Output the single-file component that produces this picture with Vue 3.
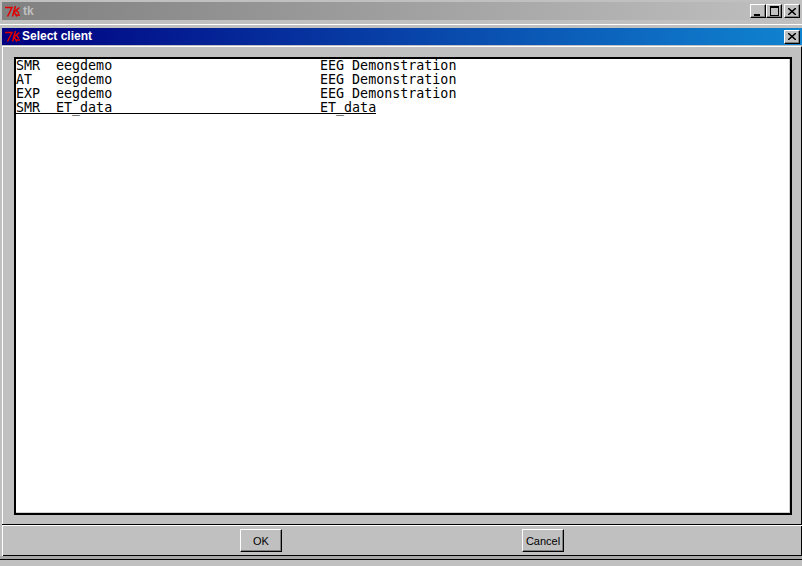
<script setup>
const rows = [
  { kind: 'SMR', name: 'eegdemo', desc: 'EEG Demonstration' },
  { kind: 'AT', name: 'eegdemo', desc: 'EEG Demonstration' },
  { kind: 'EXP', name: 'eegdemo', desc: 'EEG Demonstration' },
  { kind: 'SMR', name: 'ET_data', desc: 'ET_data', active: true },
]
</script>

<template>
  <div class="screen">
    <header class="titlebar outer">
      <svg class="tk" width="15" height="11" viewBox="0 0 15 11"><g fill="none" stroke="#e00000" stroke-width="1.500"><path d="M0 1.500H7L2.500 10.500" /><path d="M10.500 0L7.500 10.500" /><path d="M14.500 1.500L9 6L12 10.500M11.500 4.500L14 7.500M11 9H15" /></g></svg>
      <span class="title dim">tk</span>
      <div class="controls">
        <button class="wbtn"><i class="min"></i></button>
        <button class="wbtn"><i class="max"></i></button>
        <button class="wbtn gap"><svg width="8" height="7" viewBox="0 0 8 7"><path d="M0 0L8 7M8 0L0 7" stroke="#000" stroke-width="1.500" /></svg></button>
      </div>
    </header>
    <section class="dialog">
      <header class="titlebar inner">
        <svg class="tk" width="15" height="11" viewBox="0 0 15 11"><g fill="none" stroke="#e00000" stroke-width="1.500"><path d="M0 1.500H7L2.500 10.500" /><path d="M10.500 0L7.500 10.500" /><path d="M14.500 1.500L9 6L12 10.500M11.500 4.500L14 7.500M11 9H15" /></g></svg>
        <span class="title">Select client</span>
        <div class="controls">
          <button class="wbtn"><svg width="8" height="7" viewBox="0 0 8 7"><path d="M0 0L8 7M8 0L0 7" stroke="#000" stroke-width="1.500" /></svg></button>
        </div>
      </header>
      <div class="body">
        <div class="list">
          <div v-for="(r, i) in rows" :key="i" class="row" :class="{ active: r.active }">
            <span class="c1">{{ r.kind }}</span><span class="c2">{{ r.name }}</span><span class="c3">{{ r.desc }}</span>
          </div>
        </div>
      </div>
      <footer class="actions">
        <button class="btn">OK</button>
        <button class="btn">Cancel</button>
      </footer>
    </section>
    <div class="bottom"></div>
  </div>
</template>

<style scoped>
.screen {
  width: 802px;
  height: 566px;
  background: #c0c0c0;
  overflow: hidden;
  padding-top: 2px;
  box-sizing: border-box;
  font-family: "Liberation Sans", sans-serif;
}
.titlebar {
  display: flex;
  align-items: center;
  margin-left: 2px;
  padding-left: 3px;
  box-sizing: border-box;
}
.outer {
  height: 18px;
  background: linear-gradient(90deg, #808080, #c0c0c0);
}
.inner {
  height: 17px;
  background: linear-gradient(90deg, #000080, #1084d0);
}
.tk { flex: none; margin-right: 2px; }
.title {
  font: bold 12px "Liberation Sans", sans-serif;
  color: #fff;
  white-space: nowrap;
  padding-bottom: 1px;
}
.title.dim { color: #c0c0c0; margin-left: 1px; }
.controls { margin-left: auto; display: flex; padding-right: 2px; }
.wbtn {
  width: 16px;
  height: 14px;
  padding: 0;
  background: #c0c0c0;
  border: 1px solid;
  border-color: #fff #000 #000 #fff;
  box-shadow: inset -1px -1px 0 #808080;
  display: flex;
  align-items: center;
  justify-content: center;
  box-sizing: border-box;
}
.wbtn.gap { margin-left: 2px; }
.min { width: 6px; height: 2px; background: #000; margin-top: 7px; margin-right: 2px; }
.max { width: 9px; height: 10px; box-sizing: border-box; border: 1px solid #000; border-top-width: 2px; }
.dialog {
  margin-top: 4px;
  border-top: 1px solid #fff;
  padding-top: 3px;
}
.body {
  margin: 1px 0 0 2px;
  height: 478px;
  box-sizing: border-box;
  border-top: 1px solid #fff;
  border-left: 1px solid #fff;
  border-right: 1px solid #000;
  padding: 10px 9px 9px 11px;
}
.list {
  height: 100%;
  box-sizing: border-box;
  background: #fff;
  border: 2px solid #000;
  box-shadow: inset -1px -1px 0 #d0d0d0;
  font: 13.33px/14px "DejaVu Sans Mono", monospace;
  color: #000;
}
.row { display: flex; white-space: pre; height: 14px; width: 360px; box-sizing: border-box; }
.row.active { height: 13px; border-bottom: 1px solid #000; }
.c1 { flex: none; width: 40px; }
.c2 { flex: none; width: 264px; }
.c3 { flex: none; }
.actions {
  display: grid;
  grid-template-columns: 282px 282px;
  justify-items: center;
  align-items: center;
  height: 32px;
  margin-left: 2px;
  padding-left: 118px;
  box-sizing: border-box;
  border-top: 1px solid #000;
  box-shadow: inset 0 1px 0 #fff, inset 1px 0 0 #fff, inset -1px 0 0 #000, inset 0 -1px 0 #000;
}
.btn {
  width: 42px;
  height: 23px;
  padding: 0;
  background: #c0c0c0;
  border: 1px solid;
  border-color: #fff #000 #000 #fff;
  box-shadow: inset -1px -1px 0 #808080;
  font: 11px "Liberation Sans", sans-serif;
  color: #000;
}
.bottom {
  height: 4px;
  box-sizing: border-box;
  background: #a8a8a8;
  border-bottom: 1px solid #000;
}
</style>
